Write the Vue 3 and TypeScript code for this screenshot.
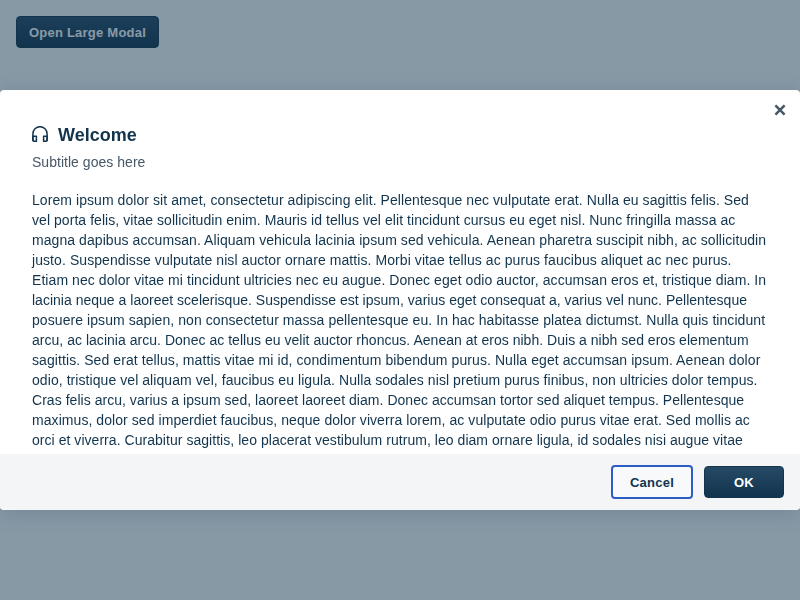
<script setup lang="ts">
import { ref } from 'vue'

interface Line {
  text: string
  tracking: number
}

const open = ref(true)

const lines: Line[] = [
  { tracking: 0.068, text: 'Lorem ipsum dolor sit amet, consectetur adipiscing elit. Pellentesque nec vulputate erat. Nulla eu sagittis felis. Sed' },
  { tracking: 0.057, text: 'vel porta felis, vitae sollicitudin enim. Mauris id tellus vel elit tincidunt cursus eu eget nisl. Nunc fringilla massa ac' },
  { tracking: 0.07, text: 'magna dapibus accumsan. Aliquam vehicula lacinia ipsum sed vehicula. Aenean pharetra suscipit nibh, ac sollicitudin' },
  { tracking: 0.075, text: 'justo. Suspendisse vulputate nisl auctor ornare mattis. Morbi vitae tellus ac purus faucibus aliquet ac nec purus.' },
  { tracking: 0.068, text: 'Etiam nec dolor vitae mi tincidunt ultricies nec eu augue. Donec eget odio auctor, accumsan eros et, tristique diam. In' },
  { tracking: 0.012, text: 'lacinia neque a laoreet scelerisque. Suspendisse est ipsum, varius eget consequat a, varius vel nunc. Pellentesque' },
  { tracking: 0.068, text: 'posuere ipsum sapien, non consectetur massa pellentesque eu. In hac habitasse platea dictumst. Nulla quis tincidunt' },
  { tracking: 0.026, text: 'arcu, ac lacinia arcu. Donec ac tellus eu velit auctor rhoncus. Aenean at eros nibh. Duis a nibh sed eros elementum' },
  { tracking: 0.082, text: 'sagittis. Sed erat tellus, mattis vitae mi id, condimentum bibendum purus. Nulla eget accumsan ipsum. Aenean dolor' },
  { tracking: 0.066, text: 'odio, tristique vel aliquam vel, faucibus eu ligula. Nulla sodales nisl pretium purus finibus, non ultricies dolor tempus.' },
  { tracking: 0.036, text: 'Cras felis arcu, varius a ipsum sed, laoreet laoreet diam. Donec accumsan tortor sed aliquet tempus. Pellentesque' },
  { tracking: 0.065, text: 'maximus, dolor sed imperdiet faucibus, neque dolor viverra lorem, ac vulputate odio purus vitae erat. Sed mollis ac' },
  { tracking: 0.042, text: 'orci et viverra. Curabitur sagittis, leo placerat vestibulum rutrum, leo diam ornare ligula, id sodales nisi augue vitae' },
]
</script>

<template>
  <main class="page">
    <button class="btn primary launcher" @click="open = true">Open Large Modal</button>
    <div v-if="open" class="overlay">
      <section class="modal" role="dialog" aria-modal="true">
        <button class="close" aria-label="Close" @click="open = false">
          <svg width="12" height="12" viewBox="0 0 12 12">
            <path d="M1.4 1.4 10.6 10.6M10.6 1.4 1.4 10.6" fill="none" stroke="#475867" stroke-width="2.5" />
          </svg>
        </button>
        <header class="head">
          <div class="title-row">
            <svg class="icon" width="16" height="16" viewBox="0 0 16 16" fill="none" stroke="#12344d" stroke-width="1.5" stroke-linejoin="round" stroke-linecap="round">
              <path d="M.9 14.5V7.8a7.1 7.1 0 0 1 14.2 0V14.5" />
              <path d="M.9 10.2H4.4V15.3H1.7L.9 14.5Z" />
              <path d="M15.1 10.2H11.6V15.3H14.3L15.1 14.5Z" />
            </svg>
            <h1>Welcome</h1>
          </div>
          <p class="subtitle">Subtitle goes here</p>
        </header>
        <div class="content">
          <span v-for="line in lines" :key="line.text" class="line" :style="{ letterSpacing: line.tracking + 'px' }">{{ line.text }}</span>
        </div>
        <footer class="foot">
          <button class="btn secondary" @click="open = false">Cancel</button>
          <button class="btn primary ok" @click="open = false">OK</button>
        </footer>
      </section>
    </div>
  </main>
</template>

<style>
body {
  background: #fff;
  overflow: hidden;
}
</style>

<style scoped>
.page {
  box-sizing: border-box;
  height: 100vh;
  padding: 16px;
  font-family: "Liberation Sans", Arial, sans-serif;
  font-size: 14px;
  line-height: 20px;
  color: #12344d;
}
.btn {
  box-sizing: border-box;
  display: block;
  height: 32px;
  padding: 2px 0 0;
  border: 1px solid #12344d;
  border-radius: 4px;
  font: bold 13px/20px "Liberation Sans", Arial, sans-serif;
  letter-spacing: 0.24px;
  white-space: nowrap;
  outline: none;
}
.primary {
  color: #fff;
  background: linear-gradient(to bottom, #264966, #12344d);
}
.launcher {
  width: 143px;
}
.overlay {
  position: fixed;
  inset: 0;
  display: flex;
  align-items: center;
  background: rgba(18, 52, 77, 0.5);
}
.modal {
  position: relative;
  display: flex;
  flex-direction: column;
  width: 800px;
  height: 420px;
  border-radius: 4px;
  overflow: hidden;
  background: #fff;
  box-shadow: 0 3px 22px 0 rgba(18, 52, 77, 0.18);
}
.close {
  position: absolute;
  top: 14px;
  right: 14px;
  display: flex;
  padding: 0;
  border: 0;
  background: none;
}
.head {
  flex: none;
  height: 67px;
  padding: 33px 32px 0;
}
.title-row {
  display: flex;
  align-items: center;
  gap: 10px;
  height: 24px;
}
.icon {
  display: block;
  margin-bottom: 2px;
}
h1 {
  margin: 0;
  font-size: 18px;
  line-height: 24px;
  font-weight: bold;
}
.subtitle {
  margin: 5px 0 0;
  color: #475867;
  letter-spacing: 0.03px;
}
.content {
  flex: 1;
  min-height: 0;
  padding: 0 32px;
  overflow: hidden;
}
.line {
  display: block;
  white-space: nowrap;
}
.foot {
  flex: none;
  display: flex;
  align-items: center;
  justify-content: flex-end;
  gap: 11px;
  box-sizing: border-box;
  height: 56px;
  padding: 0 16px;
  background: #f3f5f7;
}
.secondary {
  width: 82px;
  height: 34px;
  border: 2px solid #2c5cc5;
  color: #12344d;
  background: #f7f9fb;
}
.ok {
  width: 80px;
}
</style>
